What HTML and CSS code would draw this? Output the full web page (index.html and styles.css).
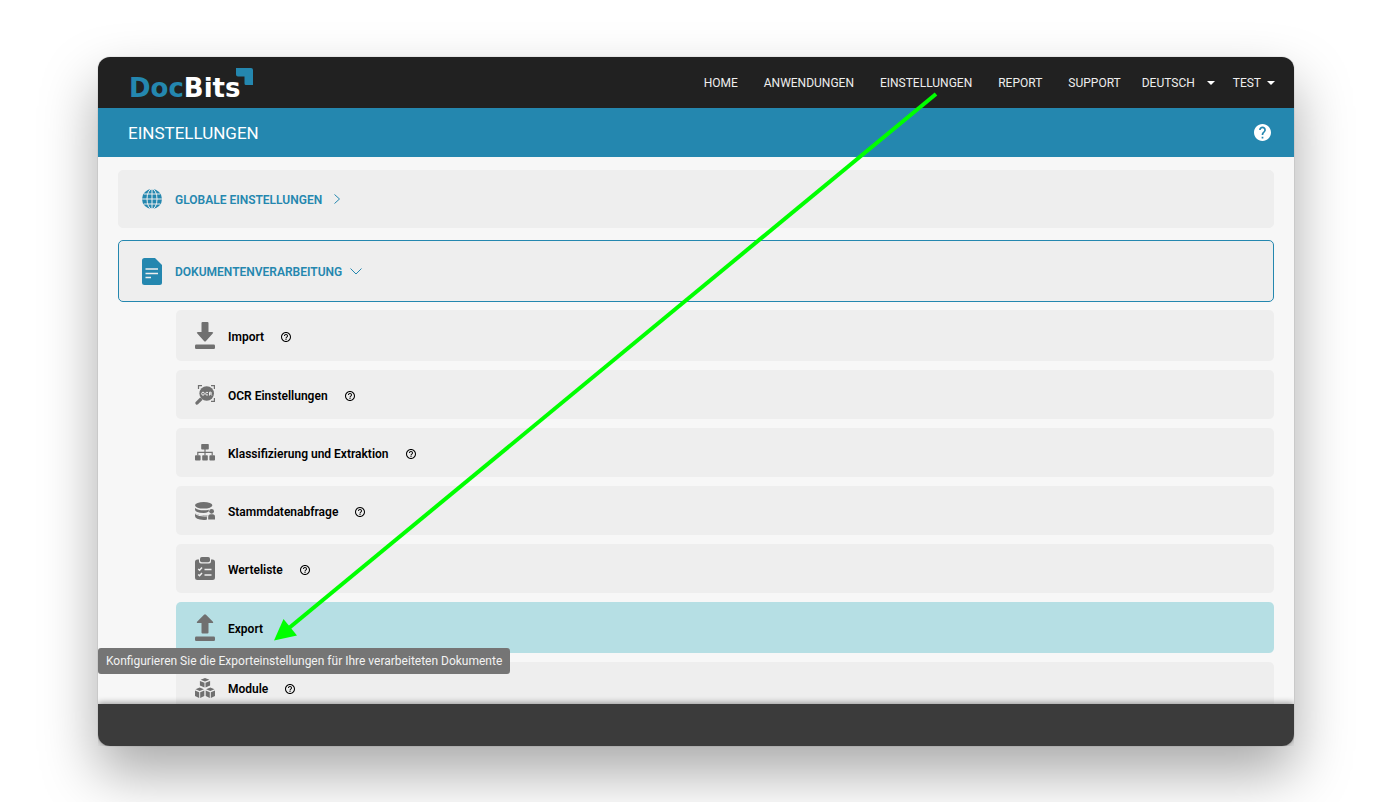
FILE: index.html
```
<!DOCTYPE html>
<html lang="de">
<head>
<meta charset="utf-8">
<title>DocBits – Einstellungen</title>
<link rel="stylesheet" href="styles.css">
</head>
<body>
<svg class="symbols" aria-hidden="true">
  <symbol id="help" viewBox="2 2 20 20"><path fill="currentColor" d="M11 18h2v-2h-2v2zm1-16C6.480 2 2 6.480 2 12s4.480 10 10 10 10-4.480 10-10S17.520 2 12 2zm0 18c-4.410 0-8-3.590-8-8s3.590-8 8-8 8 3.590 8 8-3.590 8-8 8zm0-14c-2.210 0-4 1.790-4 4h2c0-1.100.9-2 2-2s2 .9 2 2c0 2-3 1.750-3 5h2c0-2.250 3-2.500 3-5 0-2.210-1.790-4-4-4z"/></symbol>
</svg>
<div class="window">
  <header class="topbar">
    <a class="logo" href="#" aria-label="DocBits"><span class="logo-doc">Doc</span><span>Bits</span>
      <svg class="logo-mark" viewBox="0 0 17 17" aria-hidden="true"><path d="M0 0H15Q17 0 17 2V17H10Q8.500 17 8.500 15.500V8.500H2Q0 8.500 0 6.500Z"/></svg></a>
    <nav class="nav">
      <a href="#">HOME</a>
      <a href="#">ANWENDUNGEN</a>
      <a href="#">EINSTELLUNGEN</a>
      <a href="#">REPORT</a>
      <a href="#">SUPPORT</a>
    </nav>
    <div class="lang">
      <select aria-label="Sprache"><option>DEUTSCH</option></select>
      <svg class="caret" viewBox="0 0 8 4" aria-hidden="true"><path d="M0 0H8L4 4Z"/></svg>
    </div>
    <button class="user" type="button">TEST <svg class="caret" viewBox="0 0 8 4" aria-hidden="true"><path d="M0 0H8L4 4Z"/></svg></button>
  </header>
  <div class="titlebar">
    <h1>EINSTELLUNGEN</h1>
    <button class="title-help" type="button" aria-label="Hilfe"><svg viewBox="2 2 20 20"><path fill="currentColor" d="M12 2C6.480 2 2 6.480 2 12s4.480 10 10 10 10-4.480 10-10S17.520 2 12 2zm1 17h-2v-2h2v2zm2.070-7.750l-.9.920C13.450 12.900 13 13.500 13 15h-2v-.5c0-1.100.45-2.100 1.170-2.830l1.240-1.260c.37-.36.59-.86.59-1.410 0-1.100-.9-2-2-2s-2 .9-2 2H8c0-2.210 1.790-4 4-4s4 1.790 4 4c0 .88-.36 1.680-.93 2.250z"/></svg></button>
  </div>
  <main class="content">
    <button class="section" type="button">
      <svg class="globe" viewBox="0 0 20 20" aria-hidden="true"><circle cx="10" cy="10" r="10" fill="currentColor"/><g fill="none" stroke="#eee" stroke-width="1"><path d="M10 0V20M0 10H20M2 5H18M2 15H18"/><ellipse cx="10" cy="10" rx="5" ry="10"/></g></svg>
      <span>GLOBALE EINSTELLUNGEN</span>
      <svg class="chev-right" viewBox="0 0 6 10" aria-hidden="true"><path d="M.5 .5L5.500 5L.5 9.500"/></svg>
    </button>
    <button class="section open" type="button" aria-expanded="true">
      <svg class="doc" viewBox="0 0 20 27" aria-hidden="true"><path fill="currentColor" d="M2.500 0H13L20 7V24.500Q20 27 17.500 27H2.500Q0 27 0 24.500V2.500Q0 0 2.500 0Z"/><path stroke="#eee" stroke-width="1.400" d="M3.500 11H16M3.500 15.500H16M3.500 19.500H9"/></svg>
      <span>DOKUMENTENVERARBEITUNG</span>
      <svg class="chev-down" viewBox="0 0 12 7" aria-hidden="true"><path d="M.5 .5L6 6L11.500 .5"/></svg>
    </button>
    <ul class="items">
      <li class="item tall">
        <svg class="icon" viewBox="0 0 20 27" aria-hidden="true"><path d="M7.500 0H12.500Q13.500 0 13.500 1V10H17Q19 10 17.700 11.500L11 19Q10 20 9 19L2.300 11.500Q1 10 3 10H6.500V1Q6.500 0 7.500 0Z"/><rect y="22.500" width="20" height="4.500" rx="1.200"/></svg>
        <a href="#">Import</a>
        <button class="help" type="button" aria-label="Hilfe zu Import"><svg><use href="#help"/></svg></button>
      </li>
      <li class="item">
        <svg class="icon" viewBox="0 0 20 20" aria-hidden="true"><circle cx="11.700" cy="8.500" r="7.300"/><path d="M5.200 12.400L7.600 14.800L3 19.300Q1.800 20.200.8 19.200T.7 17Z"/><path class="line" d="M3.500 4V.6H7M16 .6H19.400V4M19.400 13V16.400H16"/><g class="cut"><ellipse cx="8" cy="8.700" rx="1.300" ry="1.500"/><path d="M13 7.500Q10.700 6.600 10.700 8.700T13 9.900M14.500 10.500V7.200H16Q17 8.100 16 8.900H14.500M15.700 9L16.800 10.500"/></g></svg>
        <a href="#">OCR Einstellungen</a>
        <button class="help" type="button" aria-label="Hilfe zu OCR Einstellungen"><svg><use href="#help"/></svg></button>
      </li>
      <li class="item">
        <svg class="icon" viewBox="0 0 20 17" aria-hidden="true"><rect x="6.200" width="7.600" height="5.500" rx=".8"/><rect y="11.200" width="5.600" height="5.300" rx=".8"/><rect x="7.200" y="11.200" width="5.600" height="5.300" rx=".8"/><rect x="14.400" y="11.200" width="5.600" height="5.300" rx=".8"/><path class="line" d="M10 5V11.500M2.800 11.500V8.300H17.200V11.500"/></svg>
        <a href="#">Klassifizierung und Extraktion</a>
        <button class="help" type="button" aria-label="Hilfe zu Klassifizierung und Extraktion"><svg><use href="#help"/></svg></button>
      </li>
      <li class="item">
        <svg class="icon" viewBox="0 0 20 18" aria-hidden="true"><ellipse cx="8.700" cy="3.300" rx="8.700" ry="3.300"/><path d="M0 6Q3 8.300 8.700 8.300T15 6.800Q13.500 8 13.500 9.800Q11 11 8.700 11Q0 10.600 0 7.500ZM0 11Q3 13.300 8.700 13.300H12.400Q11.600 14.500 12 17.500Q10 18 8.700 18Q0 17.500 0 14Z"/><path class="gap" d="M0 11.500Q3 14 8.700 14H12"/><circle cx="16.600" cy="9.300" r="2.400"/><path d="M13.200 17.500V15Q13.200 12.300 15.500 12.300H17.700Q20 12.300 20 15V17.500Z"/></svg>
        <a href="#">Stammdatenabfrage</a>
        <button class="help" type="button" aria-label="Hilfe zu Stammdatenabfrage"><svg><use href="#help"/></svg></button>
      </li>
      <li class="item">
        <svg class="icon" viewBox="0 0 20 23" aria-hidden="true"><path d="M2.500 2.500H4V4.500Q4 6.500 6 6.500H14Q16 6.500 16 4.500V2.500H17.500Q20 2.500 20 5V20.500Q20 23 17.500 23H2.500Q0 23 0 20.500V5Q0 2.500 2.500 2.500Z"/><rect x="5" width="10" height="5.200" rx="1.800"/><path class="cut" stroke-width="1.500" d="M3.200 12L4.600 13.300L7 10.600M3.200 17.500L4.600 18.800L7 16.100M9.500 12.400H16.500M9.500 17.900H16.500"/></svg>
        <a href="#">Werteliste</a>
        <button class="help" type="button" aria-label="Hilfe zu Werteliste"><svg><use href="#help"/></svg></button>
      </li>
      <li class="item tall active">
        <svg class="icon" viewBox="0 0 20 27" aria-hidden="true"><path d="M7.500 19.500H12.500Q13.500 19.500 13.500 18.500V9H17Q19 9 17.700 7.500L11 .7Q10 -.2 9 .7L2.300 7.500Q1 9 3 9H6.500V18.500Q6.500 19.500 7.500 19.500Z"/><rect y="22.500" width="20" height="4.500" rx="1.200"/></svg>
        <a href="#" aria-describedby="export-tip">Export</a>
        <div class="tooltip" role="tooltip" id="export-tip">Konfigurieren Sie die Exporteinstellungen für Ihre verarbeiteten Dokumente</div>
      </li>
      <li class="item tall">
        <svg class="icon" viewBox="0 0 20 20" aria-hidden="true"><path d="M10 0L14.400 1.700L10 3.500L5.600 1.700ZM4.900 2.900L9.500 4.700V9.400L4.900 7.500ZM15.100 2.900L10.500 4.700V9.400L15.100 7.500ZM4.700 9.500L8.900 11.200L4.700 13L.5 11.200ZM0 12.400L4.200 14.200V19.900L0 18ZM9.300 12.400L5.200 14.200V19.900L9.300 18ZM15.300 9.500L19.500 11.200L15.300 13L11.100 11.200ZM10.700 12.400L14.800 14.200V19.900L10.700 18ZM20 12.400L15.800 14.200V19.900L20 18Z"/></svg>
        <a href="#">Module</a>
        <button class="help" type="button" aria-label="Hilfe zu Module"><svg><use href="#help"/></svg></button>
      </li>
    </ul>
  </main>
  <footer class="footer"></footer>
  <svg class="pointer" width="670" height="560" viewBox="0 0 670 560" aria-hidden="true"><path fill="none" stroke="#0f0" stroke-width="4" d="M665 7L18 541"/><path fill="#0f0" d="M3 553.500L12.500 532L26 548.500Z"/></svg>
</div>
</body>
</html>
```
FILE: styles.css
```
* {
  box-sizing: border-box;
}

body {
  margin: 0;
  height: 100vh;
  padding: 57px 98px 56px;
  background: #fff;
  font-family: Roboto, "Liberation Sans", sans-serif;
  font-size: 12px;
  overflow: hidden;
}

button,
select {
  padding: 0;
  border: 0;
  background: none;
  color: inherit;
  font: inherit;
  appearance: none;
  cursor: pointer;
}

a {
  color: inherit;
  text-decoration: none;
}

svg {
  display: block;
  flex: none;
}

.symbols {
  position: absolute;
  width: 0;
  height: 0;
}

.window {
  position: relative;
  display: flex;
  flex-direction: column;
  height: 100%;
  border-radius: 12px;
  background: #f7f7f7;
  box-shadow: 0 0 1px rgba(0, 0, 0, 0.5), 0 27px 56px rgba(0, 0, 0, 0.34);
}

.topbar {
  display: flex;
  flex: none;
  align-items: center;
  height: 51px;
  padding: 0 19px 0 31px;
  border-radius: 12px 12px 0 0;
  background: #212121;
  color: #eee;
}

.logo {
  position: relative;
  display: flex;
  padding-top: 10px;
  color: #fff;
  font-family: "DejaVu Sans", sans-serif;
  font-size: 26px;
  font-weight: 700;
  line-height: 30px;
}

.logo-doc {
  color: #2487af;
}

.logo-mark {
  position: absolute;
  top: 5px;
  right: -12px;
  width: 17px;
  height: 17px;
  fill: #2487af;
}

.nav {
  display: flex;
  gap: 26px;
  margin-left: auto;
}

.lang,
.user {
  display: flex;
  align-items: center;
}

.lang {
  gap: 11px;
  margin-left: 21px;
}

.user {
  gap: 6px;
  margin-left: 18px;
}

.caret {
  width: 8px;
  height: 4px;
  fill: #fff;
}

.titlebar {
  display: flex;
  flex: none;
  align-items: center;
  justify-content: space-between;
  height: 49px;
  padding: 0 23px 0 30px;
  background: #2487af;
  color: #fff;
}

.titlebar h1 {
  margin: 0;
  font-size: 17px;
  font-weight: 400;
}

.title-help svg {
  width: 17px;
  height: 17px;
}

.content {
  flex: 1;
  min-height: 0;
  padding: 13px 20px 0;
  overflow: hidden;
}

.section {
  display: flex;
  align-items: center;
  width: 100%;
  height: 58px;
  margin-bottom: 12px;
  padding: 0 23px;
  border: 1px solid #eee;
  border-radius: 5px;
  background: #eee;
  color: #2487af;
  font-weight: 600;
}

.section span,
.item a {
  padding-top: 2px;
}

.section.open {
  height: 62px;
  margin-bottom: 8px;
  border-color: #2487af;
}

.globe {
  width: 20px;
  height: 20px;
  margin-right: 13px;
}

.doc {
  width: 20px;
  height: 27px;
  margin-right: 13px;
}

.chev-right,
.chev-down {
  fill: none;
  stroke: #2487af;
}

.chev-right {
  width: 6px;
  height: 10px;
  margin-left: 12px;
}

.chev-down {
  width: 12px;
  height: 7px;
  margin-left: 8px;
}

.items {
  display: flex;
  flex-direction: column;
  gap: 9px;
  margin: 0 0 0 58px;
  padding: 0;
  list-style: none;
}

.item {
  position: relative;
  display: flex;
  align-items: center;
  height: 49px;
  padding: 0 19px;
  border-radius: 5px;
  background: #eee;
  color: #000;
  font-weight: 600;
}

.item.tall {
  height: 51px;
}

.item.active {
  background: #b6dfe4;
}

.icon {
  width: 20px;
  margin-right: 13px;
  fill: #707070;
}

.icon .line {
  fill: none;
  stroke: #707070;
  stroke-width: 1.2;
}

.icon .cut {
  fill: none;
  stroke: #eee;
}

.icon .gap {
  fill: none;
  stroke: #eee;
  stroke-width: 1;
}

.help {
  margin-left: 17px;
  padding-top: 2px;
}

.help svg {
  width: 10px;
  height: 10px;
}

.tooltip {
  position: absolute;
  z-index: 2;
  top: 46px;
  left: -78px;
  padding: 0 8px;
  border-radius: 3px;
  background: #757575;
  color: #f2f2f2;
  font-size: 12px;
  font-weight: 400;
  line-height: 26px;
  white-space: nowrap;
}

.footer {
  flex: none;
  height: 42px;
  border-radius: 0 0 12px 12px;
  background: #3b3b3b;
  box-shadow: 0 -1px 6px rgba(0, 0, 0, 0.4);
  clip-path: inset(-12px 0 0 0);
}

.pointer {
  position: absolute;
  top: 30px;
  left: 173px;
  pointer-events: none;
}
```
